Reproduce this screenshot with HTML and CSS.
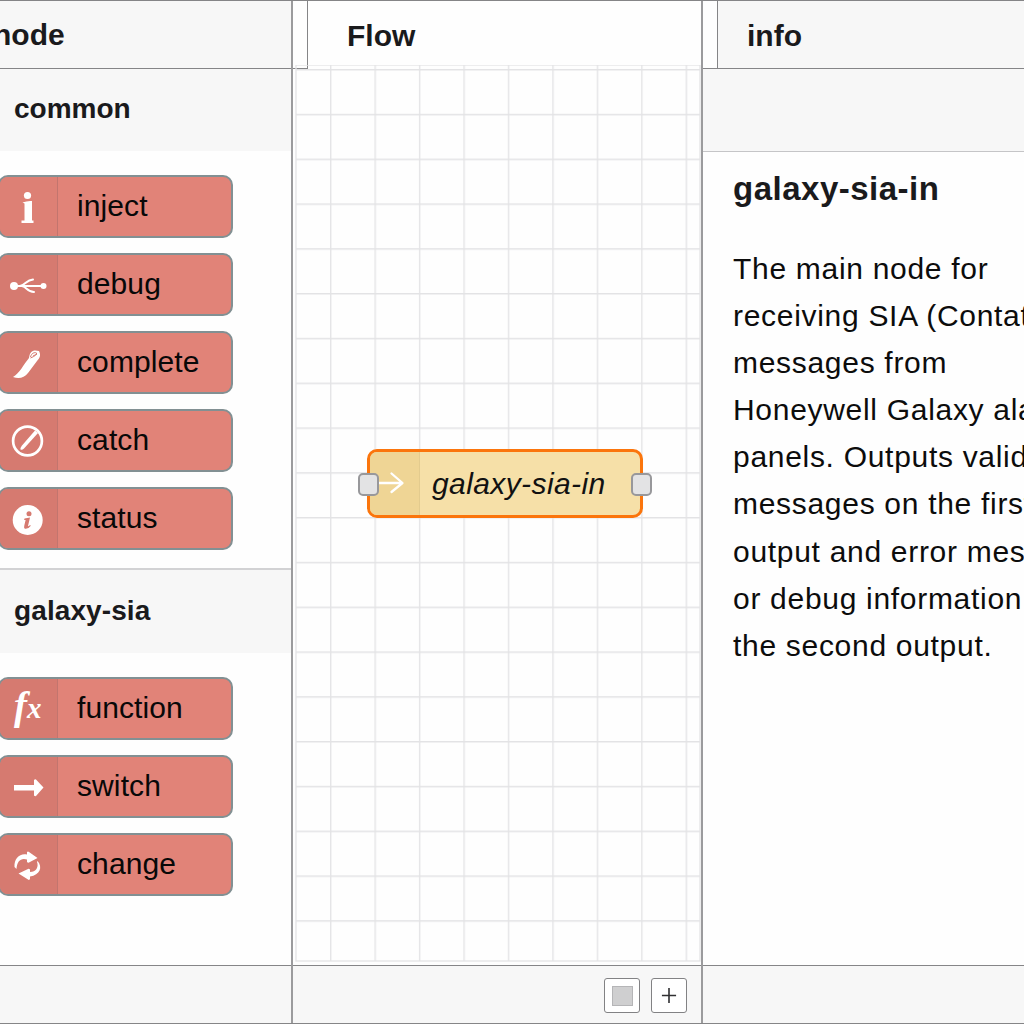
FILE: index.html
```html
<!DOCTYPE html>
<html lang="en">
<head>
<meta charset="utf-8">
<title>Flow editor</title>
<link rel="stylesheet" href="styles.css">
</head>
<body>
<div class="editor">
  <aside class="palette">
    <header class="bar palette-title">node</header>
    <h2 class="category">common</h2>
    <ul class="nodes">
      <li class="node"><span class="icon light"><svg viewBox="0 0 58 60"><circle cx="27.5" cy="18.500" r="3.600"/><path d="M22.500 25.500q5-2 9.500-1.500v19.500h1.500v2.500h-12v-2.500h3v-17z"/></svg></span><span class="label">inject</span></li>
      <li class="node"><span class="icon"><svg viewBox="0 0 58 60"><circle cx="14" cy="31" r="4"/><circle cx="43.500" cy="31" r="3"/><path class="line" d="M14 31h29M20 31c6-1 6-6 13-6.500M22 31c5 1 5 6 12 6"/></svg></span><span class="label">debug</span></li>
      <li class="node"><span class="icon"><svg viewBox="0 0 58 60"><path d="M13 44C19 41 24 31 29 25C30 18 33 16.500 39 18C41 22 40 25 37 28L28 40C24 45 19 46 13 44z"/><path class="cut" d="M30.500 24c1-4 4-5 6-4q1 2-6 5M33 23l4-2"/></svg></span><span class="label">complete</span></li>
      <li class="node"><span class="icon"><svg viewBox="0 0 58 60"><circle class="ring" cx="27.500" cy="30" r="14.400"/><path d="M35 19.500l3 2.500L24 37.500q-2 2-3.500 1-.5-1.500 1.500-4z"/></svg></span><span class="label">catch</span></li>
      <li class="node"><span class="icon"><svg viewBox="0 0 58 60"><circle cx="27.700" cy="31" r="15"/><circle class="red" cx="29" cy="24.800" r="2.500"/><path class="red" d="M24.500 29.500l5.500-1-2 8.500q1 .5 2-1l.8.7q-2.500 3.600-6 3-1.200-.8-.5-3.200l1.300-5.500h-1.500z"/></svg></span><span class="label">status</span></li>
    </ul>
    <h2 class="category second">galaxy-sia</h2>
    <ul class="nodes">
      <li class="node"><span class="icon fx"><i class="f">f</i><i class="x">x</i></span><span class="label">function</span></li>
      <li class="node"><span class="icon"><svg viewBox="0 0 58 60"><path d="M14 28h20v-5q1-1 2-.5l7.500 8-7.500 8.500q-1 .5-2-.5v-5H14z"/></svg></span><span class="label">switch</span></li>
      <li class="node"><span class="icon"><svg viewBox="0 0 58 60"><path d="M14.500 32C14 23 20 18 27 19.500V17q1-1 2 0l8.500 6-8.500 4.500q-1 .5-2-.5v-2.500C21 22.500 17 26 16.500 34z"/><path d="M37.500 26C43 32 40 40 30 41.500V44q-1 1.500-2 .5L18.500 38.500 28 34q1-.5 2 .5v2.500C36 37 39 32 37 27z"/></svg></span><span class="label">change</span></li>
    </ul>
    <footer class="foot"></footer>
  </aside>

  <main class="workspace">
    <header class="bar tabs"><span class="stub"></span><span class="tab">Flow</span></header>
    <section class="canvas">
      <svg class="grid" viewBox="0 0 408 900">
        <defs><pattern id="grid" x="37" y="4" width="44.450" height="44.800" patternUnits="userSpaceOnUse"><path d="M.75 0v44.800M0 .75h44.450"/></pattern></defs>
        <rect x="3" width="404" height="896" fill="url(#grid)"/>
      </svg>
      <div class="flow-node">
        <span class="flow-icon"><svg viewBox="0 0 48 60"><path d="M9 31h23M21.500 21.500l11 9.500-11 9"/></svg></span>
        <span class="flow-label">galaxy-sia-in</span>
        <span class="port in"></span><span class="port out"></span>
      </div>
    </section>
    <footer class="foot actions">
      <button class="tool" aria-label="Overview"><span class="swatch"></span></button>
      <button class="tool" aria-label="Add"><svg viewBox="0 0 36 34"><path d="M10.500 17h15M18 9v16"/></svg></button>
    </footer>
  </main>

  <aside class="sidebar">
    <header class="bar tabs"><span class="stub"></span><span class="tab shaded">info</span></header>
    <div class="toolbar"></div>
    <article class="help">
      <h1>galaxy-sia-in</h1>
      <p>The main node for<br>receiving SIA (Contat<br>messages from<br>Honeywell Galaxy alarm<br>panels. Outputs valid<br>messages on the first<br>output and error messages<br>or debug information<br>the second output.</p>
    </article>
    <footer class="foot"></footer>
  </aside>
</div>
</body>
</html>
```
FILE: styles.css
```css
* { box-sizing: border-box; }
body { margin: 0; background: #fefefe; color: #1a1a1c; font-family: "Liberation Sans", Arial, sans-serif; overflow: hidden; }
h1, h2, p, ul { margin: 0; padding: 0; }
svg { display: block; }
.editor { display: grid; grid-template-columns: 291px 410px 323px; width: 1024px; height: 1024px; overflow: hidden; border-top: 1px solid #858587; border-bottom: 1px solid #858587; }
.palette, .workspace, .sidebar { display: flex; flex-direction: column; min-width: 0; overflow: hidden; }
.workspace, .sidebar { border-left: 2px solid #9b9b9d; }
.bar { height: 68px; flex: none; font-weight: bold; font-size: 30px; line-height: 68px; }
.palette-title { background: #f7f7f7; border-bottom: 1px solid #858587; text-indent: -7px; }
.category { height: 82px; flex: none; background: #f7f7f7; padding-left: 14px; font-size: 28px; line-height: 80px; }
.second { height: 85px; margin-top: 18px; border-top: 2px solid #d2d2d4; line-height: 82px; letter-spacing: .1px; }
.nodes { list-style: none; display: grid; gap: 15px; padding-top: 24px; }
.node { display: flex; width: 235px; height: 63px; margin-left: -2px; border: 2px solid #829093; border-radius: 10px; background: #e18378; overflow: hidden; }
.icon { flex: none; width: 58px; border-right: 1px solid #c2756e; background: #d67a70; }
.icon svg { width: 58px; height: 60px; fill: #fff; }
.light { background: #dd8075; }
.icon .line { fill: none; stroke: #fff; stroke-width: 2; stroke-linecap: round; }
.icon .cut { fill: none; stroke: #d67a70; stroke-width: 1; }
.icon .ring { fill: none; stroke: #fff; stroke-width: 2.700; }
.icon .red { fill: #d67a70; }
.label { padding-left: 19px; color: #080808; font-size: 30px; line-height: 57px; letter-spacing: .1px; }
.fx { display: flex; padding-left: 14px; color: #fff; font-family: "Liberation Serif", serif; font-weight: bold; }
.f { font-size: 39px; line-height: 53px; }
.x { font-size: 29px; line-height: 59px; }
.foot { height: 58px; flex: none; margin-top: auto; border-top: 1px solid #858587; background: #f7f7f7; }
.tabs { display: flex; }
.stub { width: 15px; height: 68px; border-right: 1px solid #858587; border-bottom: 1px solid #858587; }
.tab { flex: 1; padding-left: 39px; line-height: 70px; }
.shaded { background: #f7f7f7; padding-left: 29px; border-bottom: 1px solid #858587; }
.canvas { position: relative; flex: 1; margin-top: -4px; }
.grid { width: 408px; height: 900px; position: absolute; left: 0; top: 0; stroke: #e3e3e5; stroke-width: 1.300; }
.flow-node { position: absolute; left: 74px; top: 384px; width: 276px; height: 69px; display: flex; border: 3px solid #fb750c; border-radius: 10px; background: #f6e0a8; }
.flow-icon { width: 50px; border-right: 1px solid #e3cb8e; background: #efd595; border-radius: 7px 0 0 7px; }
.flow-icon svg { width: 48px; height: 60px; fill: none; stroke: #fff; stroke-width: 2.300; stroke-linecap: round; stroke-linejoin: round; }
.flow-label { padding-left: 12px; color: #111; font-size: 30px; font-style: italic; line-height: 63px; letter-spacing: .4px; white-space: nowrap; }
.port { position: absolute; top: 21px; width: 21px; height: 23px; border: 2px solid #98989b; border-radius: 5px; background: #e3e3e4; }
.in { left: -12px; }
.out { right: -12px; }
.actions { display: flex; justify-content: flex-end; gap: 11px; padding: 12px 14px 0 0; }
.tool { width: 36px; height: 35px; padding: 0; display: grid; place-items: center; border: 1px solid #828284; border-radius: 3px; background: #fff; }
.tool svg { width: 34px; height: 33px; stroke: #303032; stroke-width: 1.700; }
.swatch { width: 21px; height: 20px; border: 1px solid #b5b5b7; background: #cfcfd0; }
.toolbar { height: 83px; flex: none; background: #f7f7f7; border-bottom: 1px solid #c5c5c7; }
.help { padding: 17px 0 0 30px; white-space: nowrap; }
.help h1 { font-size: 33px; line-height: 40px; letter-spacing: .5px; }
.help p { margin-top: 36px; color: #0c0c0c; font-size: 30px; line-height: 47.100px; letter-spacing: .7px; }
```
